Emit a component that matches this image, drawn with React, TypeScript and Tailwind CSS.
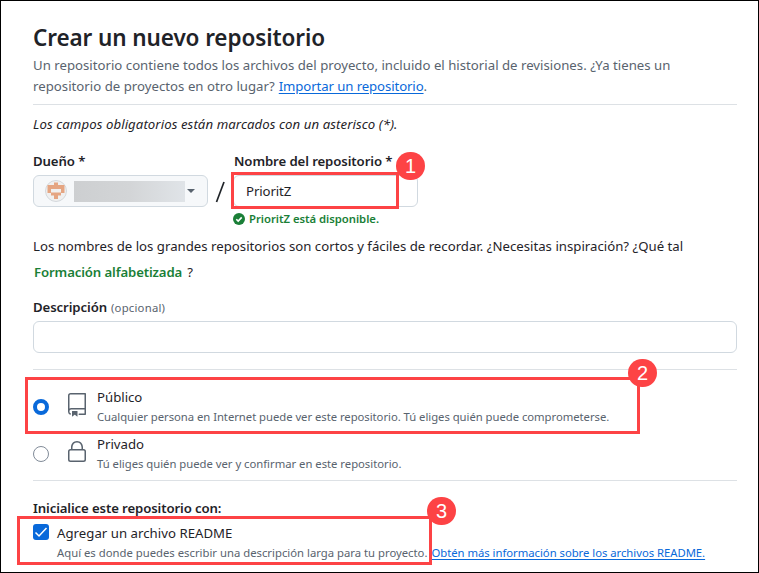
import type { ReactNode } from "react";

function Badge({ n, place }: { n: number; place: string }) {
  return (
    <span className={`absolute z-20 flex h-[28px] w-[29px] items-center justify-center rounded-full bg-[#fd4345] font-['Liberation_Sans',sans-serif] text-[20px] leading-none text-white ${place}`}>
      {n}
    </span>
  );
}

function Line({ className, children }: { className: string; children: ReactNode }) {
  return <div className={`flex items-center whitespace-nowrap ${className}`}>{children}</div>;
}

function OwnerAvatar() {
  return (
    <svg className="h-[22px] w-[22px]" viewBox="0 0 22 22">
      <circle cx="11" cy="11" r="10.500" fill="#f0f0f0" stroke="#d4d8dc" />
      <path d="M9 2.500h4V5h6.500v8H16v2.500h-3V19H9v-3.500H6V13H2.500V5H9z" fill="#e5a582" />
      <path d="M6 9h10v3.500H6z" fill="#f0f0f0" />
    </svg>
  );
}

function RepoIcon() {
  return (
    <svg className="h-6 w-6" viewBox="0 0 24 24" fill="#59636e">
      <path d="M3 2.750A2.750 2.750 0 0 1 5.750 0h14.500a.75.75 0 0 1 .75.75v20.500a.75.75 0 0 1-.75.75h-6a.75.75 0 0 1 0-1.500h5.250v-4H6A1.500 1.500 0 0 0 4.500 18v.75c0 .716.43 1.334 1.050 1.605a.75.75 0 0 1-.6 1.374A3.251 3.251 0 0 1 3 18.750ZM19.500 1.500H5.750c-.69 0-1.250.56-1.250 1.250v12.651A2.989 2.989 0 0 1 6 15h13.500Z" />
      <path d="M7 18.250a.25.25 0 0 1 .25-.25h5a.25.25 0 0 1 .25.25v5.010a.25.25 0 0 1-.397.201l-2.206-1.604a.25.25 0 0 0-.294 0L7.397 23.460a.25.25 0 0 1-.397-.2v-5.010Z" />
    </svg>
  );
}

function LockIcon() {
  return (
    <svg className="h-6 w-6" viewBox="0 0 24 24" fill="#59636e">
      <path d="M6 9V7.250C6 3.845 8.503 1 12 1s6 2.845 6 6.250V9h.5a2.500 2.500 0 0 1 2.500 2.500v8a2.500 2.500 0 0 1-2.500 2.500h-13A2.500 2.500 0 0 1 3 19.500v-8A2.500 2.500 0 0 1 5.500 9Zm-1.500 2.500v8a1 1 0 0 0 1 1h13a1 1 0 0 0 1-1v-8a1 1 0 0 0-1-1h-13a1 1 0 0 0-1 1Zm3-4.250V9h9V7.250c0-2.670-1.922-4.750-4.500-4.750-2.578 0-4.500 2.080-4.500 4.750Z" />
    </svg>
  );
}

export default function App() {
  return (
    <main className="relative h-[573px] w-[759px] overflow-hidden border border-black bg-white px-8 font-['Noto_Sans',sans-serif] text-[13.2px] text-[#1f2328]">
      <header className="pt-[21px]">
        <h1 className="h-[33px] text-[22.5px] leading-[31px] font-semibold tracking-[-0.1px] whitespace-nowrap">Crear un nuevo repositorio</h1>
        <Line className="h-[21px] tracking-[0.01px] text-[#59636e]">Un repositorio contiene todos los archivos del proyecto, incluido el historial de revisiones. ¿Ya tienes un</Line>
        <Line className="h-[21px] text-[#59636e]">
          <span className="tracking-[0.02px]">repositorio de proyectos en otro lugar?</span>
          <a className="ml-1 tracking-[-0.1px] text-[#0969da] underline underline-offset-2">Importar un repositorio</a>.
        </Line>
      </header>
      <hr className="mt-[7px] w-[704px] border-[#dde1e5]" />
      <Line className="mt-[10px] h-5 tracking-[0.08px] italic">Los campos obligatorios están marcados con un asterisco (*).</Line>

      <section className="mt-[17px] flex h-[77px]">
        <div className="w-[175px]">
          <Line className="h-5 font-semibold tracking-[-0.1px]">Dueño *</Line>
          <button className="mt-[3px] flex h-8 w-[175px] items-center rounded-md border border-[#d1d9e0] bg-[#f6f8fa] pl-[11px]">
            <OwnerAvatar />
            <span className="ml-[7px] h-[21px] w-[111px] bg-gradient-to-r from-[#cdcfd1] via-[#d3d5d7] to-[#e0e4e8]" />
            <span className="ml-[2px] border-x-4 border-t-4 border-x-transparent border-t-[#59636e]" />
          </button>
        </div>
        <svg className="mt-[29px] h-[22px] w-[25px]" viewBox="0 0 25 22" fill="none" stroke="#1f2328" strokeWidth="1.700">
          <path d="M8.500 21L16 1" />
        </svg>
        <div className="relative w-[185px]">
          <Line className="h-5 pl-px font-semibold tracking-[-0.1px]">Nombre del repositorio *</Line>
          <div className="mt-[3px] flex h-8 items-center rounded-md border border-[#d1d9e0] pt-0.5 pl-[12px] tracking-[-0.1px]">PrioritZ</div>
          <Line className="mt-[3px] h-[18px] text-[11.3px] font-semibold text-[#1a7f37]">
            <svg className="mr-1 h-3 w-3" viewBox="0 0 12 12">
              <circle cx="6" cy="6" r="6" fill="#1a7f37" />
              <path d="M3.300 6.200l1.900 1.900 3.500-3.700" fill="none" stroke="white" strokeWidth="1.600" />
            </svg>
            <span className="tracking-[-0.03px]">PrioritZ está disponible.</span>
          </Line>
          <div className="absolute top-[20px] left-[-2px] h-[37px] w-[168px] border-[3px] border-[#fd4345]" />
          <Badge n={1} place="top-0 left-[163px]" />
        </div>
      </section>

      <Line className="mt-[8px] h-5 tracking-[0.01px]">Los nombres de los grandes repositorios son cortos y fáciles de recordar. ¿Necesitas inspiración? ¿Qué tal</Line>
      <Line className="mt-[6px] h-5 pl-px">
        <span className="font-semibold tracking-[-0.12px] text-[#1a7f37]">Formación alfabetizada</span>
        <span className="ml-[5px]">?</span>
      </Line>
      <Line className="mt-[15px] h-5">
        <span className="font-semibold tracking-[-0.1px]">Descripción</span>
        <span className="ml-1 text-[11.3px] tracking-[0.22px] text-[#59636e]">(opcional)</span>
      </Line>
      <div className="mt-[3px] h-8 w-[704px] rounded-md border border-[#d1d9e0]" />
      <hr className="mt-4 w-[704px] border-[#dde1e5]" />

      <section className="relative h-[110px] pt-[18px]">
        <div className="flex h-[47px]">
          <span className="mt-[11px] h-4 w-4 rounded-full border-[4px] border-[#0969da]" />
          <span className="mt-[5px] ml-4"><RepoIcon /></span>
          <div className="ml-2">
            <Line className="h-5">Público</Line>
            <Line className="h-[18px] text-[11.3px] tracking-[-0.04px] text-[#59636e]">Cualquier persona en Internet puede ver este repositorio. Tú eliges quién puede comprometerse.</Line>
          </div>
        </div>
        <div className="flex h-[44px]">
          <span className="mt-[11px] h-4 w-4 rounded-full border border-[#818b98]" />
          <span className="mt-[5px] ml-4"><LockIcon /></span>
          <div className="ml-2">
            <Line className="h-5">Privado</Line>
            <Line className="h-[18px] text-[11.3px] tracking-[-0.02px] text-[#59636e]">Tú eliges quién puede ver y confirmar en este repositorio.</Line>
          </div>
        </div>
        <div className="absolute top-[7px] left-[-8px] h-[57px] w-[615px] border-[3px] border-[#fd4345]" />
        <Badge n={2} place="top-[-11px] left-[595px]" />
      </section>
      <hr className="w-[704px] border-[#dde1e5]" />

      <section className="relative pt-[18px]">
        <Line className="h-5 font-semibold tracking-[-0.12px]">Inicialice este repositorio con:</Line>
        <div className="flex pt-[5px]">
          <span className="flex h-4 w-4 items-center justify-center rounded-[3px] bg-[#0969da]">
            <svg className="h-4 w-4" viewBox="0 0 16 16" fill="none" stroke="white" strokeWidth="1.500"><path d="M2.500 8.500L6 12L13.500 4" /></svg>
          </span>
          <div className="ml-2">
            <Line className="h-5 tracking-[0.03px]">Agregar un archivo README</Line>
            <Line className="h-[18px] text-[11.3px] text-[#59636e]">
              <span>Aquí es donde puedes escribir una descripción larga para tu proyecto.</span>
              <a className="ml-1 tracking-[-0.03px] text-[#0969da] underline underline-offset-2">Obtén más información sobre los archivos README.</a>
            </Line>
          </div>
        </div>
        <div className="absolute top-[35px] left-[-16px] h-[49px] w-[415px] border-[3px] border-[#fd4345]" />
        <Badge n={3} place="top-[16px] left-[394px]" />
      </section>
    </main>
  );
}
